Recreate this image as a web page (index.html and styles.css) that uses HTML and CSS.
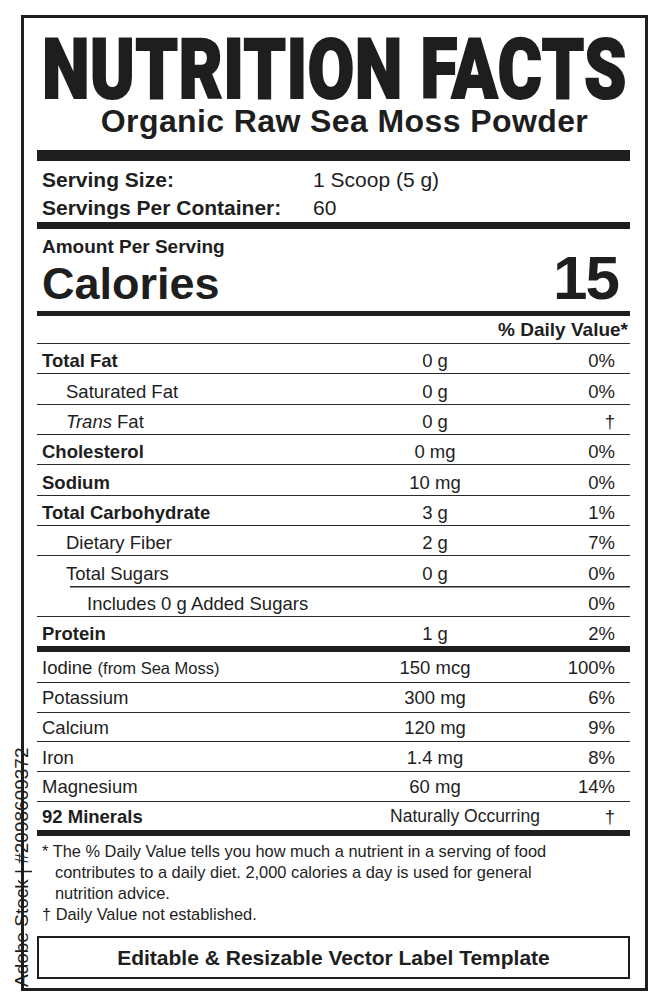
FILE: index.html
```html
<!DOCTYPE html>
<html lang="en">
<head>
<meta charset="utf-8">
<title>Nutrition Facts</title>
<link rel="stylesheet" href="styles.css">
</head>
<body>
<div class="label">
  <div class="title"><span class="title-text">NUTRITION FACTS</span></div>
  <div class="subtitle">Organic Raw Sea Moss Powder</div>
  <div class="bar bar-11"></div>
  <div class="serving">
    <div class="serving-line"><span class="serving-key">Serving Size:</span><span>1 Scoop (5 g)</span></div>
    <div class="serving-line"><span class="serving-key">Servings Per Container:</span><span>60</span></div>
  </div>
  <div class="bar bar-7"></div>
  <div class="amount">Amount Per Serving</div>
  <div class="cal-row"><span class="cal-label">Calories</span><span class="cal-value">15</span></div>
  <div class="bar bar-5"></div>
  <div class="dv-head">% Daily Value*</div>

  <div class="section section-a">
    <div class="row"><span class="name b">Total Fat</span><span class="amt">0 g</span><span class="dv">0%</span></div>
    <div class="row"><span class="name in1">Saturated Fat</span><span class="amt">0 g</span><span class="dv">0%</span></div>
    <div class="row"><span class="name in1"><i>Trans</i> Fat</span><span class="amt">0 g</span><span class="dv">†</span></div>
    <div class="row"><span class="name b">Cholesterol</span><span class="amt">0 mg</span><span class="dv">0%</span></div>
    <div class="row"><span class="name b">Sodium</span><span class="amt">10 mg</span><span class="dv">0%</span></div>
    <div class="row"><span class="name b">Total Carbohydrate</span><span class="amt">3 g</span><span class="dv">1%</span></div>
    <div class="row"><span class="name in1">Dietary Fiber</span><span class="amt">2 g</span><span class="dv">7%</span></div>
    <div class="row"><span class="name in1">Total Sugars</span><span class="amt">0 g</span><span class="dv">0%</span></div>
    <div class="row row-indent-line"><span class="name in2">Includes 0 g Added Sugars</span><span class="amt"></span><span class="dv">0%</span></div>
    <div class="row"><span class="name b">Protein</span><span class="amt">1 g</span><span class="dv">2%</span></div>
  </div>
  <div class="bar bar-6"></div>
  <div class="section section-b">
    <div class="row first"><span class="name">Iodine <span class="small">(from Sea Moss)</span></span><span class="amt">150 mcg</span><span class="dv">100%</span></div>
    <div class="row"><span class="name">Potassium</span><span class="amt">300 mg</span><span class="dv">6%</span></div>
    <div class="row"><span class="name">Calcium</span><span class="amt">120 mg</span><span class="dv">9%</span></div>
    <div class="row"><span class="name">Iron</span><span class="amt">1.4 mg</span><span class="dv">8%</span></div>
    <div class="row"><span class="name">Magnesium</span><span class="amt">60 mg</span><span class="dv">14%</span></div>
    <div class="row"><span class="name b">92 Minerals</span><span class="amt amt-wide">Naturally Occurring</span><span class="dv">†</span></div>
  </div>
  <div class="bar bar-6"></div>
  <div class="notes">
    <p class="note">* The % Daily Value tells you how much a nutrient in a serving of food<br>contributes to a daily diet. 2,000 calories a day is used for general<br>nutrition advice.</p>
    <p class="note">† Daily Value not established.</p>
  </div>
  <div class="template-box">Editable &amp; Resizable Vector Label Template</div>
</div>
<div class="stock-mark">Adobe Stock | #2098609372</div>
</body>
</html>
```

FILE: styles.css
```css
html, body {
  margin: 0;
  padding: 0;
  background: #ffffff;
}
body {
  font-family: "Liberation Sans", Arial, sans-serif;
  color: #1e1e1e;
  position: relative;
  width: 667px;
  height: 1000px;
  overflow: hidden;
}
.label {
  box-sizing: border-box;
  margin: 15px 0 0 21px;
  width: 627px;
  border: 3px solid #1e1e1e;
  padding: 21px 15px 9px 13px;
}
.title {
  display: flex;
  justify-content: center;
  height: 62px;
  line-height: 62px;
  white-space: nowrap;
  padding-left: 3px;
}
.title-text {
  display: block;
  font-family: Roboto, "Liberation Sans", sans-serif;
  font-weight: 900;
  font-size: 84px;
  -webkit-text-stroke: 2.2px #1e1e1e;
  transform: scaleX(0.8);
  transform-origin: center;
  letter-spacing: 1px;
}
.subtitle {
  margin-top: 5px;
  font-weight: bold;
  font-size: 32px;
  line-height: 30px;
  letter-spacing: 0.4px;
  text-align: center;
  padding-left: 22px;
}
.bar { background: #1e1e1e; }
.bar-11 { height: 11px; margin-top: 14px; }
.bar-7 { height: 7px; }
.bar-6 { height: 6px; }
.bar-5 { height: 5px; }

.serving { padding: 5px 0 0 5px; }
.serving-line {
  display: flex;
  font-size: 21px;
  line-height: 28px;
}
.serving-key {
  font-weight: bold;
  width: 271px;
}

.amount {
  padding: 9px 0 0 5px;
  font-weight: bold;
  font-size: 19px;
  line-height: 18px;
}
.cal-row {
  display: flex;
  justify-content: space-between;
  align-items: baseline;
  line-height: 44px;
  padding: 0 12px 5px 5px;
}
.cal-label { font-weight: bold; font-size: 45px; }
.cal-value { font-weight: bold; font-size: 62px; letter-spacing: -2px; }

.dv-head {
  text-align: right;
  font-weight: bold;
  font-size: 19px;
  line-height: 27px;
  padding-right: 2px;
}

.row {
  box-sizing: border-box;
  display: flex;
  align-items: center;
  font-size: 18.5px;
  border-top: 1.5px solid #2a2a2a;
}
.section-a .row { height: 30.35px; padding-top: 6px; line-height: 22.85px; }
.section-b .row { height: 29.67px; padding-top: 1px; line-height: 27px; }
.row.first { border-top: none; }
.row-indent-line { border-top: none; background: linear-gradient(#2a2a2a, #2a2a2a) no-repeat 33px 0 / calc(100% - 33px) 1.5px; }
.name { flex: 1; padding-left: 5px; white-space: nowrap; }
.name.b { font-weight: bold; }
.name.in1 { padding-left: 29px; }
.name.in2 { padding-left: 50px; }
.small { font-size: 16.5px; }
.amt { width: 150px; text-align: center; white-space: nowrap; }
.amt-wide { font-size: 17.5px; padding-left: 30px; box-sizing: border-box; width: 180px; margin-right: -30px; }
.dv { width: 105px; padding-right: 15px; text-align: right; }

.notes { padding: 5px 0 0 5px; }
.note {
  margin: 0;
  font-size: 16.4px;
  line-height: 21px;
  padding-left: 13px;
  text-indent: -13px;
}
.template-box {
  margin-top: 11px;
  height: 43px;
  box-sizing: border-box;
  border: 2px solid #1e1e1e;
  text-align: center;
  font-weight: bold;
  font-size: 21px;
  line-height: 39px;
}
.stock-mark {
  position: absolute;
  left: 12px;
  top: 744px;
  writing-mode: vertical-rl;
  transform: rotate(180deg);
  font-size: 19px;
  line-height: 20px;
  color: #1e1e1e;
  white-space: nowrap;
  height: 243px;
  text-align: left;
}
```
